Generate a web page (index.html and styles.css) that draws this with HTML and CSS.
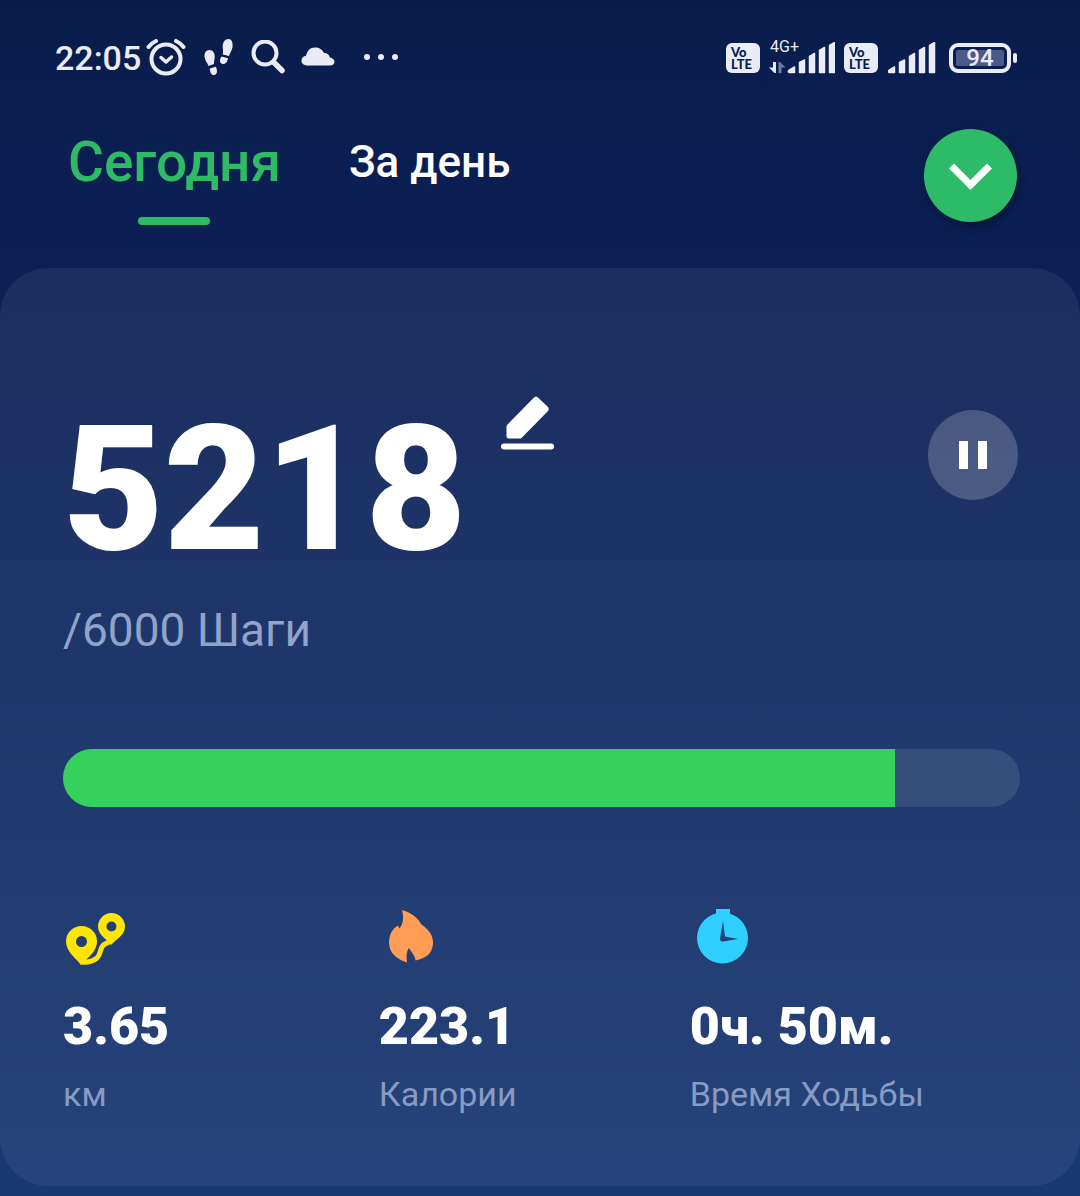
FILE: index.html
```
<!DOCTYPE html>
<html lang="ru">
<head>
    <meta charset="UTF-8">
    <meta name="viewport" content="width=device-width, initial-scale=1.0">
    <title>Шагомер</title>
    <link rel="stylesheet" href="styles.css">
</head>
<body>
    <div class="status">
      <div class="status-left">
        <span class="time">22:05</span>
        <svg class="alarm" width="40" height="38" viewBox="0 0 40 38" fill="none" stroke="#e9ecf6" stroke-linecap="round" stroke-linejoin="round">
          <circle cx="20" cy="20" r="14.500" stroke-width="4"/>
          <path d="M15 18.500l5 4.500 5.500-5" stroke-width="3.500"/>
          <path d="M2.500 8q3-4 7.500-6M37.500 8q-3-4-7.500-6" stroke-width="4"/>
        </svg>
        <svg class="steps" width="30" height="38" viewBox="0 0 30 38" fill="#e9ecf6">
          <path d="M5 11C8.500 10.500 11 14 10.700 18C10.500 21 9.800 23 10 25L4.500 27C3.500 24 .8 21.500 .5 17.500C.3 14 2 11.400 5 11z"/>
          <path d="M5.800 29.500l6-1.800C13.500 31 13.500 35 10.500 36C7.500 36.800 6 33.500 5.800 29.500z"/>
          <path d="M24.500 0C28 .3 29 4 28.500 8C28 11.500 26 14 25 17L18.800 15.500C19.500 12 18.500 10 18.700 7C19 3 21 0 24.500 0z"/>
          <path d="M17.500 17.500l6.500 1.800C23.500 23 21.500 25.500 18.500 25C15 24 15.500 20.500 17.500 17.500z"/>
        </svg>
        <svg class="search" width="35" height="36" viewBox="0 0 35 36" fill="none" stroke="#e9ecf6" stroke-linecap="round">
          <circle cx="14" cy="13" r="11.500" stroke-width="4"/>
          <path d="M23 22.500l8 8" stroke-width="5.500"/>
        </svg>
        <svg class="cloud" width="34" height="22" viewBox="0 0 34 22" fill="#e9ecf6">
          <path d="M6 18.500C2.500 18.500 .5 16.300 .5 13.800C.5 11 2.500 9 5 8.800C6 4 9 .5 14 .5C18 .5 21.500 2.500 23 6C26 6 28.500 8 28.800 10.500C31.500 10.800 33.500 12.500 33.500 14.800C33.500 17 31.500 18.500 29 18.500z"/>
        </svg>
        <svg class="dots" width="36" height="8" viewBox="0 0 36 8" fill="#e9ecf6">
          <circle cx="4" cy="3" r="3"/><circle cx="18" cy="3" r="3"/><circle cx="32" cy="3" r="3"/>
        </svg>
      </div>
      <div class="status-right">
        <span class="volte"><span>Vo</span><span>LTE</span></span>
        <div class="network">
          <span class="network-type">4G+</span>
          <svg width="66" height="32" viewBox="0 0 66 32">
            <path d="M4 20h3v11H5.500L0 25.500h4z" fill="#e9ecf6"/>
            <path d="M9.500 31V20H11l5.500 5.500h-4V31z" fill="#6f7ba3"/>
            <path d="M20.500 30.500Q18 29.500 20.500 28L25.500 25v5.500zM30.500 20.500l5-2.500v12.500h-5zM40.500 14.500l5-3v19h-5zM50.500 8.500l5-3v25h-5zM60.500 3.500l5-3v30h-5z" fill="#e9ecf6" stroke="#e9ecf6" stroke-width="1.500" stroke-linejoin="round"/>
          </svg>
        </div>
        <span class="volte"><span>Vo</span><span>LTE</span></span>
        <svg class="signal" width="48" height="32" viewBox="0 0 48 32" fill="#e9ecf6" stroke="#e9ecf6" stroke-width="1.500" stroke-linejoin="round">
          <path d="M1.500 30.500Q-1 29.500 1.500 28L6.500 25v5.500zM11.500 20.500l5-2.500v12.500h-5zM21.500 14.500l5-3v19h-5zM31.500 8.500l5-3v25h-5zM41.500 3.500l5-3v30h-5z"/>
        </svg>
        <div class="battery"><span>94</span></div>
        <div class="battery-tip"></div>
      </div>
    </div>

    <div class="header">
      <div class="tabs">
        <button class="tab active">Сегодня</button>
        <button class="tab">За день</button>
      </div>
      <button class="more" aria-label="Открыть меню">
        <svg width="44" height="28" viewBox="0 0 44 28" fill="none" stroke="#fff" stroke-width="7">
          <path d="M2.500 4l19 19 19-19"/>
        </svg>
      </button>
    </div>

    <div class="card">
      <div class="top">
        <div class="count">5218</div>
        <button class="edit" aria-label="Изменить">
          <svg width="54" height="54" viewBox="0 0 54 54" fill="#fff">
            <path d="M6 29L32.500 2Q35 -1 37.500 2L46.500 10.500Q49 13 46.500 15.500L20 42.500H8Q5.500 42.500 5.500 40V30.500z"/>
            <rect x="0" y="47.500" width="53" height="6" rx="3"/>
          </svg>
        </button>
        <button class="pause" aria-label="Пауза">
          <svg width="28" height="28" viewBox="0 0 28 28" fill="#fff">
            <path d="M0 0h9v28H0zM19 0h9v28h-9z"/>
          </svg>
        </button>
      </div>
      <div class="goal">/6000 Шаги</div>
      <progress class="bar" value="5218" max="6000" aria-label="Шаги"></progress>

      <div class="stats">
        <div class="stat">
          <svg width="64" height="56" viewBox="0 0 64 56">
            <path d="M18 53Q28 54 34 49C39 44 36 38 42 35L48 32" fill="none" stroke="#ffe600" stroke-width="5"/>
            <path fill="#ffe600" fill-rule="evenodd" d="M18 56C14 50 3 43 3 32.500a15.500 15.500 0 0 1 31 0C34 43 24 49 18 56zM18.500 27a5.500 5.500 0 1 0 0 11 5.500 5.500 0 0 0 0-11z"/>
            <path fill="#ffe600" fill-rule="evenodd" d="M48 36C45 31 35 26.500 35 17.500a13.500 13.500 0 0 1 27 0C62 26.500 52 31 48 36zM48.500 12.500a5 5 0 1 0 0 10 5 5 0 0 0 0-10z"/>
          </svg>
          <div class="value">3.65</div>
          <div class="label">км</div>
        </div>
        <div class="stat">
          <svg width="64" height="56" viewBox="0 0 64 56">
            <path fill="#ff9d57" d="M23 1C33 4 39 9 42 15C50 21 54 26 54 34C53.500 45 47 49 36.500 51.500C36 46 32 43 30 39C27 43 27.500 48 28 53.500C19 51 10 44 10 34C10 26 13 20 19 16.500L20.500 19.500C24 15 25 9 23 1z"/>
          </svg>
          <div class="value">223.1</div>
          <div class="label">Калории</div>
        </div>
        <div class="stat">
          <svg width="64" height="56" viewBox="0 0 64 56">
            <path fill="#2fcfff" d="M26 0h14v6H26z"/>
            <circle cx="32.500" cy="29" r="25.500" fill="#2fcfff"/>
            <path fill="#1c4577" d="M33 12L35 27.500L48 30L33 32.500Q30 33 30 29.500z"/>
          </svg>
          <div class="value">0ч. 50м.</div>
          <div class="label">Время Ходьбы</div>
        </div>
      </div>
    </div>
</body>
</html>
```
FILE: styles.css
```
* {
    box-sizing: border-box;
}

body {
    margin: 0;
    min-height: 100vh;
    padding-bottom: 10px;
    font-family: Roboto, "Noto Sans", sans-serif;
    color: #fff;
    background: linear-gradient(#091d4c, #0b1f54 20%, #193973);
}

button {
    border: none;
    padding: 0;
    background: none;
    color: inherit;
    font-family: inherit;
    cursor: pointer;
}

svg {
    display: block;
    flex-shrink: 0;
}

.status {
    display: flex;
    justify-content: space-between;
    height: 116px;
    padding: 0 63px 0 55px;
    color: #e9ecf6;
}

.status-left,
.status-right {
    display: flex;
    align-items: center;
}

.time {
    font-size: 34px;
    font-weight: 500;
    line-height: 40px;
}

.alarm {
    margin-left: 5px;
}

.steps {
    margin-left: 18px;
}

.search {
    margin-left: 17px;
}

.cloud {
    margin-left: 15px;
}

.dots {
    margin-left: 28px;
}

.volte {
    display: flex;
    flex-direction: column;
    width: 34px;
    height: 30px;
    padding: 3px 0 0 5px;
    border-radius: 6px;
    background-color: #e9ecf6;
    color: #0a1d4b;
    font-family: Lato, sans-serif;
    font-size: 13px;
    font-weight: 900;
    line-height: 12px;
}

.network {
    position: relative;
    margin: 0 9px;
}

.network-type {
    position: absolute;
    top: -4px;
    left: 1px;
    font-size: 16px;
    line-height: 18px;
}

.signal {
    margin: 0 13px 0 10px;
}

.battery {
    width: 62px;
    height: 30px;
    padding: 3px;
    border: 4px solid #e9ecf6;
    border-radius: 9px;
}

.battery span {
    display: flex;
    align-items: center;
    justify-content: center;
    width: 48px;
    height: 16px;
    border-radius: 2px;
    background-color: #4b5a88;
    font-size: 24px;
    font-weight: 500;
}

.battery-tip {
    width: 4px;
    height: 10px;
    margin-left: 2px;
    border-radius: 2px;
    background-color: #e9ecf6;
}

.header {
    display: flex;
    justify-content: space-between;
    height: 152px;
    padding: 13px 63px 0 68px;
}

.tabs {
    display: flex;
    align-items: flex-start;
    gap: 68px;
}

.tab {
    font-size: 44px;
    font-weight: 500;
    line-height: 66px;
}

.tab.active {
    color: #2fba66;
    font-size: 55px;
}

.tab.active::after {
    content: "";
    display: block;
    width: 72px;
    height: 8px;
    margin: 22px auto 0;
    border-radius: 4px;
    background-color: #2fba66;
}

.more {
    display: flex;
    align-items: center;
    justify-content: center;
    width: 93px;
    height: 93px;
    border-radius: 50%;
    background-color: #2dbb67;
    box-shadow: 2px 5px 10px rgba(0, 0, 0, 0.35);
}

.card {
    padding: 128px 60px 72px 63px;
    border-radius: 48px;
    background-color: rgba(255, 255, 255, 0.06);
}

.top {
    display: flex;
    align-items: flex-start;
}

.count {
    font-size: 174px;
    font-weight: 900;
    line-height: 188px;
}

.edit {
    margin-left: 35px;
}

.pause {
    display: flex;
    align-items: center;
    justify-content: center;
    width: 90px;
    height: 90px;
    margin: 14px 2px 0 auto;
    border-radius: 50%;
    background-color: rgba(255, 255, 255, 0.2);
}

.goal {
    margin-top: 18px;
    color: #8fa3cb;
    font-size: 46px;
    line-height: 56px;
}

.bar {
    display: block;
    width: 100%;
    height: 58px;
    margin-top: 91px;
    border: none;
    border-radius: 29px;
    overflow: hidden;
    appearance: none;
    background-color: #374e7c;
}

.bar::-webkit-progress-bar {
    background-color: #374e7c;
}

.bar::-webkit-progress-value {
    background-color: #35d15d;
}

.stats {
    display: grid;
    grid-template-columns: 33% 32.5% 1fr;
    margin-top: 102px;
}

.stat svg {
    margin-bottom: 32px;
}

.value {
    font-size: 52px;
    font-weight: 900;
    line-height: 60px;
}

.label {
    margin-top: 17px;
    color: #879cc5;
    font-size: 34px;
    line-height: 40px;
}
```
